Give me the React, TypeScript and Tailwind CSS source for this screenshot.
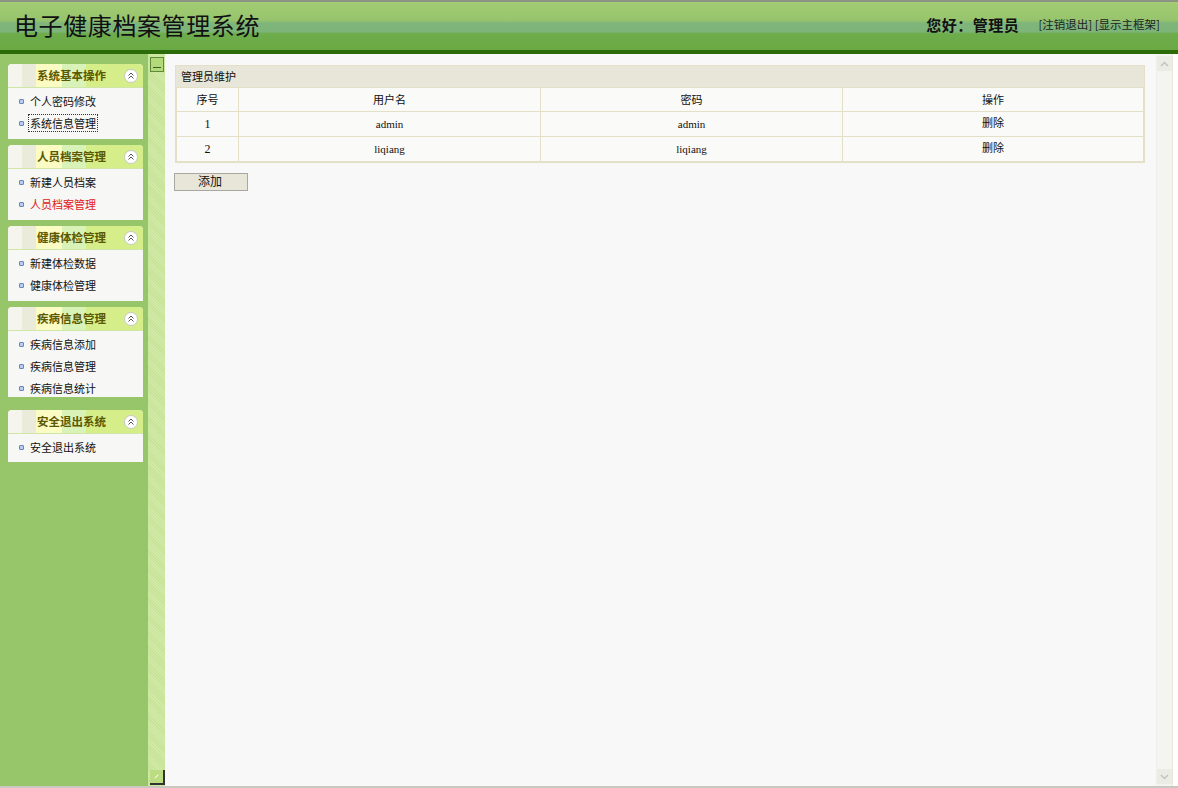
import React from "react";

const cjk = { fontFamily: '"SimSun","Noto Sans CJK SC","Liberation Sans",sans-serif' };
const serif = { fontFamily: '"Liberation Serif","Noto Sans CJK SC",serif' };

const groups = [
  { title: "系统基本操作", items: ["个人密码修改", "系统信息管理"], body: "h-[52px]" },
  { title: "人员档案管理", items: ["新建人员档案", "人员档案管理"], body: "h-[52px]" },
  { title: "健康体检管理", items: ["新建体检数据", "健康体检管理"], body: "h-[52px]" },
  { title: "疾病信息管理", items: ["疾病信息添加", "疾病信息管理", "疾病信息统计"], body: "h-[67px]" },
  { title: "安全退出系统", items: ["安全退出系统"], body: "h-[29px]" },
];

const admins = [
  { id: "1", name: "admin", pwd: "admin" },
  { id: "2", name: "liqiang", pwd: "liqiang" },
];

function Collapse() {
  return (
    <span className="flex h-[14px] w-[14px] items-center justify-center rounded-full border border-[#c8c8c8] bg-white">
      <svg width="8" height="8" viewBox="0 0 8 8" fill="none" stroke="#555" strokeWidth="1">
        <path d="M1.5 3.5 L4 1 L6.5 3.5" />
        <path d="M1.5 6.5 L4 4 L6.5 6.5" />
      </svg>
    </span>
  );
}

function MenuGroup({ title, items, body }: { title: string; items: string[]; body: string }) {
  return (
    <div className="w-[135px] rounded-t-[4px] bg-[#f7f7f5]">
      <div className="relative flex h-[23px] items-center overflow-hidden rounded-t-[4px]">
        <div className="absolute inset-0 flex">
          <div className="w-[14px] bg-[#f5f5ee]" />
          <div className="w-[14px] bg-[#ebebdc]" />
          <div className="w-[26px] bg-[#fbfbc4]" />
          <div className="w-[24px] bg-[#d8f2b8]" />
          <div className="flex-1 bg-[#d6ee8a]" />
        </div>
        <span className="relative ml-[29px] text-[11.5px] font-bold text-[#5c5800]" style={cjk}>
          {title}
        </span>
        <span className="relative ml-auto mr-[5px]">
          <Collapse />
        </span>
      </div>
      <div className={"flex flex-col border-t border-[#cfe6a6] pt-[2px] " + body}>
        {items.map((it) => {
          const active = it === "人员档案管理" && title === "人员档案管理";
          const focused = it === "系统信息管理";
          return (
            <div key={it} className="flex h-[22px] shrink-0 items-center pl-[11px]">
              <span className="mr-[6px] h-[5px] w-[5px] rounded-[1px] border border-[#6a86b8] bg-[#b8cdf0]" />
              <span
                className={
                  "text-[11px] leading-[14px] " +
                  (active ? "text-[#e0201a]" : "text-[#111]") +
                  (focused ? " outline outline-1 outline-offset-1 outline-dotted outline-[#333]" : "")
                }
                style={cjk}
              >
                {it}
              </span>
            </div>
          );
        })}
      </div>
    </div>
  );
}

export default function App() {
  return (
    <div className="flex h-[788px] w-[1178px] flex-col overflow-hidden bg-[#f8f8f8]">
      {/* header */}
      <div className="flex h-[54px] flex-col">
        <div className="h-[2px] bg-[#8c9484]" />
        <div className="relative flex-1 bg-[linear-gradient(to_bottom,#a3cc74_0%,#96c46c_38%,#7fb57a_44%,#7db478_62%,#6eac4c_66%,#6aaa44_100%)]">
          <div className="flex h-full items-center justify-between pb-[2px] pl-[14px] pr-[18px]">
            <span className="text-[24px] tracking-[0.6px] text-[#111]" style={cjk}>
              电子健康档案管理系统
            </span>
            <div className="flex items-center">
              <span className="text-[15px] font-bold tracking-[0.5px] text-[#111]" style={cjk}>
                您好：管理员
              </span>
              <span className="ml-[19px] text-[11.5px] text-[#222]" style={cjk}>
                [注销退出] [显示主框架]
              </span>
            </div>
          </div>
        </div>
        <div className="h-[4px] bg-[#2c6c08]" />
      </div>

      {/* body */}
      <div className="flex flex-1">
        <div className="flex w-[148px] flex-col gap-[6px] bg-[#97c56a] pl-[8px] pt-[10px]">
          {groups.map((g, i) => (
            <div key={g.title} className={i === 4 ? "mt-[7px]" : ""}>
              <MenuGroup title={g.title} items={g.items} body={g.body} />
            </div>
          ))}
        </div>

        <div className="flex w-[17px] flex-col justify-between bg-[#cbe69e] bg-[repeating-linear-gradient(45deg,#c6e397_0px,#c6e397_1px,#d2eaa8_1px,#d2eaa8_2px)] pb-[1px] pl-[2px] pt-[3px]">
          <div className="flex h-[15px] w-[14px] items-end justify-center border border-[#5e8a3c] bg-[#b3d97a] pb-[3px]">
            <span className="h-[1px] w-[8px] bg-[#3d5e22]" />
          </div>
          <div className="flex h-[15px] w-[15px] items-center justify-center border-b-2 border-r-2 border-[#333] bg-[#bcdc82]">
            <span className="h-[1px] w-[5px] -rotate-45 bg-white" />
          </div>
        </div>

        <div className="flex-1 pl-[10px] pt-[11px]">
          <div className="w-[970px] border border-[#e4e0c8] bg-[#fafaf8]" style={cjk}>
            <div className="flex h-[21px] items-center bg-[#e8e6d8] pl-[5px] text-[11px] text-[#111]">
              管理员维护
            </div>
            <table className="w-full border-collapse text-[11px] text-[#111]">
              <tbody>
                <tr className="h-[24px]">
                  <td className="w-[62px] border border-[#e4e0c8] text-center">序号</td>
                  <td className="w-[302px] border border-[#e4e0c8] text-center">用户名</td>
                  <td className="w-[302px] border border-[#e4e0c8] text-center">密码</td>
                  <td className="border border-[#e4e0c8] text-center">操作</td>
                </tr>
                {admins.map((a) => (
                  <tr key={a.id} className="h-[25px]">
                    <td className="border border-[#e4e0c8] text-center text-[12px]" style={serif}>{a.id}</td>
                    <td className="border border-[#e4e0c8] text-center text-[11px]" style={serif}>{a.name}</td>
                    <td className="border border-[#e4e0c8] text-center text-[11px]" style={serif}>{a.pwd}</td>
                    <td className="border border-[#e4e0c8] pb-[4px] text-center">删除</td>
                  </tr>
                ))}
              </tbody>
            </table>
          </div>
          <button
            type="button"
            className="-ml-[1px] mt-[10px] flex h-[18px] w-[74px] items-center justify-center border border-[#a8a8a0] bg-[#e8e6d8] text-[12px] text-[#111]"
            style={cjk}
          >
            <span className="-ml-[2px] -mt-[3px]">添加</span>
          </button>
        </div>

        <div className="flex w-[16px] flex-col justify-between border-l border-[#f0f0ea] bg-[#f4f4f0] py-[2px]">
          <div className="flex h-[15px] items-center justify-center bg-[#ecece6]">
            <svg width="9" height="6" viewBox="0 0 9 6" fill="none" stroke="#c4c4bc" strokeWidth="1.5">
              <path d="M1 5 L4.5 1.5 L8 5" />
            </svg>
          </div>
          <div className="flex h-[15px] items-center justify-center bg-[#ecece6]">
            <svg width="9" height="6" viewBox="0 0 9 6" fill="none" stroke="#c4c4bc" strokeWidth="1.5">
              <path d="M1 1 L4.5 4.5 L8 1" />
            </svg>
          </div>
        </div>
        <div className="w-[6px] border-l border-[#e8e8d8] bg-white" />
      </div>
      <div className="h-[2px] bg-[#c8c8c0]" />
    </div>
  );
}
